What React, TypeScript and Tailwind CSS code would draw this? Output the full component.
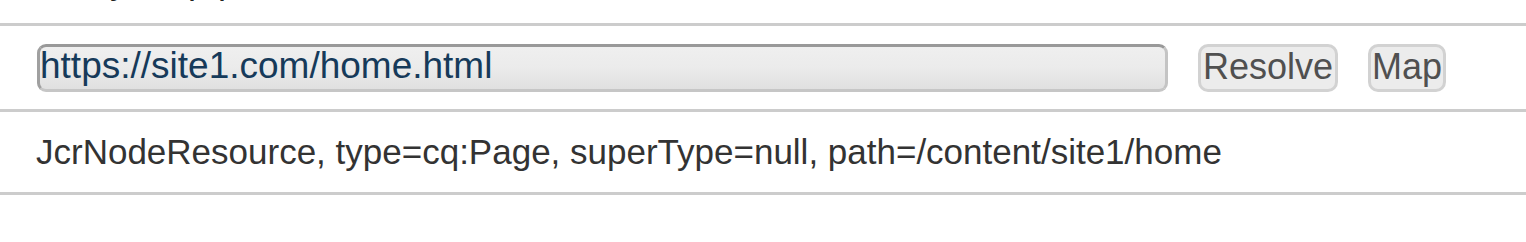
import React from 'react'

const URL_VALUE = 'https://site1.com/home.html'
const RESULT = 'JcrNodeResource, type=cq:Page, superType=null, path=/content/site1/home'

function Divider(): React.ReactElement {
  return <div className="h-[3px] w-full bg-[#cccccc]" />
}

function ActionButton({ label, className }: { label: string; className: string }): React.ReactElement {
  return (
    <button
      className={`flex h-[48px] shrink-0 items-start justify-center rounded-[10px] border-[3px] border-[#d2d2d2] bg-[#ececec] pt-[2px] leading-[36px] text-[#505050] ${className}`}
      type="button"
    >
      {label}
    </button>
  )
}

export default function App(): React.ReactElement {
  return (
    <div className="w-[1526px] bg-white text-[36px] text-[#333333] [font-family:'Liberation_Sans',Arial,sans-serif]">
      {/* tail of the intro text above, scrolled out of view */}
      <div className="h-[23px] overflow-hidden pl-[36px]">
        <p className="-mt-[37px] whitespace-nowrap leading-[36px] text-[#222222]">Every map path</p>
      </div>
      <Divider />
      <div className="flex h-[83px] items-start pl-[37px] pt-[18px]">
        <div className="h-[48px] w-[1131px] shrink-0 overflow-hidden whitespace-nowrap rounded-[9px] border-[3px] border-t-[#999999] border-l-[#a0a0a0] border-r-[#c4c4c4] border-b-[#c6c6c6] bg-gradient-to-b from-[#efefef] via-[#ebebeb] to-[#e0e0e0] pt-[1px] text-[37px] leading-[36px] text-[#163a5a]">
          {URL_VALUE}
        </div>
        <ActionButton label="Resolve" className="ml-[30px] w-[140px]" />
        <ActionButton label="Map" className="ml-[30px] w-[78px]" />
      </div>
      <Divider />
      <div className="flex h-[80px] items-center pl-[36px]">
        <span className="whitespace-nowrap text-[35px]">{RESULT}</span>
      </div>
      <Divider />
      <div className="h-[47px]" />
    </div>
  )
}
